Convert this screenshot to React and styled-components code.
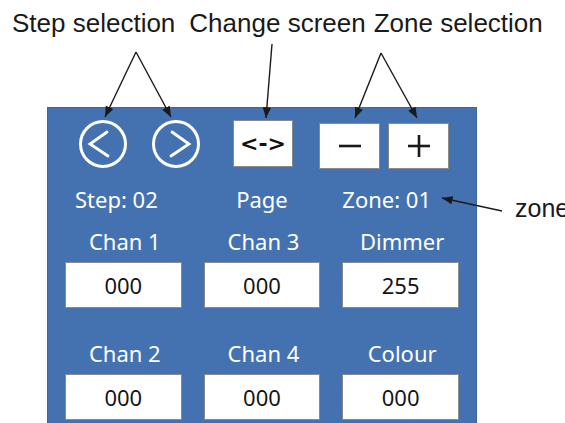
import React from "react";
import styled, { createGlobalStyle } from "styled-components";

const Global = createGlobalStyle`
  html, body { margin: 0; padding: 0; background: #ffffff; }
  body { font-family: "Noto Sans", "DejaVu Sans", sans-serif; }
`;

const Page = styled.div`
  position: relative;
  width: 565px;
  height: 423px;
  overflow: hidden;
  background: #ffffff;
`;

const Header = styled.div`
  display: flex;
  padding: 8px 0 0 12px;
  height: 30px;
  font-family: "Liberation Sans", Arial, sans-serif;
  font-size: 26px;
  line-height: 30px;
  color: #1a1a1a;
  white-space: nowrap;
`;

const HeaderLabel = styled.span`
  margin-left: ${(p) => p.$offset || 0}px;
`;

const Body = styled.div`
  display: flex;
  align-items: flex-start;
  margin-top: 69px;
  padding-left: 47px;
`;

const Panel = styled.div`
  box-sizing: border-box;
  width: 430px;
  height: 330px;
  flex-shrink: 0;
  background: #4472b0;
  border: 1px solid #3e669f;
  padding: 12px 17px 0;
  color: #ffffff;
`;

const TopRow = styled.div`
  display: flex;
  align-items: flex-start;
  height: 48px;
`;

const NavGroup = styled.div`
  display: flex;
  gap: 25px;
  margin-left: 14px;
`;

const CircleButton = styled.div`
  width: 48px;
  height: 48px;
  display: flex;
  align-items: center;
  justify-content: center;
`;

const ChangeButton = styled.div`
  box-sizing: border-box;
  width: 60px;
  height: 47px;
  margin-left: 33px;
  background: #ffffff;
  border: 1px solid #8a8a8a;
  display: flex;
  align-items: center;
  justify-content: center;
  font-family: "DejaVu Sans", sans-serif;
  font-weight: bold;
  font-size: 22px;
  color: #111111;
`;

const ZoneGroup = styled.div`
  display: flex;
  gap: 8px;
  margin-left: 26px;
  margin-top: 3px;
`;

const ZoneButton = styled.div`
  box-sizing: border-box;
  width: 61px;
  height: 46px;
  background: #ffffff;
  border: 1px solid #8a8a8a;
  display: flex;
  align-items: center;
  justify-content: center;
`;

const InfoRow = styled.div`
  display: grid;
  grid-template-columns: repeat(3, 1fr);
  column-gap: 22px;
  margin-top: 16px;
  font-size: 22px;
  line-height: 30px;
`;

const InfoText = styled.div`
  text-align: ${(p) => p.$align || "left"};
  padding-left: ${(p) => p.$pad || 0}px;
  white-space: nowrap;
`;

const ChannelGrid = styled.div`
  display: grid;
  grid-template-columns: repeat(3, 1fr);
  column-gap: 22px;
  row-gap: 30px;
  margin-top: 12px;
`;

const Cell = styled.div`
  display: flex;
  flex-direction: column;
  align-items: stretch;
`;

const CellLabel = styled.div`
  font-size: 22px;
  line-height: 30px;
  text-align: center;
  padding-left: 3px;
  white-space: nowrap;
`;

const ValueBox = styled.div`
  box-sizing: border-box;
  margin-top: 6px;
  height: 46px;
  background: #ffffff;
  border: 1px solid #8a8a8a;
  display: flex;
  align-items: center;
  justify-content: center;
  font-size: 22px;
  color: #151515;
`;

const SideNote = styled.div`
  margin-left: 38px;
  margin-top: 86px;
  font-family: "Liberation Sans", Arial, sans-serif;
  font-size: 25px;
  line-height: 30px;
  color: #1a1a1a;
  white-space: nowrap;
`;

const Overlay = styled.svg`
  position: absolute;
  left: 0;
  top: 0;
  pointer-events: none;
`;

function Chevron({ dir }) {
  const d = dir === "left" ? "M28 12 L11 24 L29 36" : "M20 12 L37 24 L19 36";
  return (
    <svg width="48" height="48" viewBox="0 0 48 48">
      <circle cx="24" cy="24" r="22.5" fill="none" stroke="#fff" strokeWidth="3" />
      <path d={d} fill="none" stroke="#fff" strokeWidth="2.8" strokeLinecap="round" strokeLinejoin="miter" />
    </svg>
  );
}

function MinusIcon() {
  return (
    <svg width="24" height="24" viewBox="0 0 24 24">
      <line x1="1" y1="12" x2="23" y2="12" stroke="#1a1a1a" strokeWidth="2.6" />
    </svg>
  );
}

function PlusIcon() {
  return (
    <svg width="24" height="24" viewBox="0 0 24 24">
      <line x1="1" y1="12" x2="23" y2="12" stroke="#1a1a1a" strokeWidth="2.6" />
      <line x1="12" y1="1" x2="12" y2="23" stroke="#1a1a1a" strokeWidth="2.6" />
    </svg>
  );
}

const channels = [
  { label: "Chan 1", value: "000" },
  { label: "Chan 3", value: "000" },
  { label: "Dimmer", value: "255" },
  { label: "Chan 2", value: "000" },
  { label: "Chan 4", value: "000" },
  { label: "Colour", value: "000" },
];

const arrows = [
  [136, 52, 105, 117],
  [136, 52, 171, 117],
  [272, 44, 266, 118],
  [381, 53, 355, 118],
  [381, 53, 417, 118],
  [502, 211, 442, 198],
];

export default function App() {
  return (
    <>
      <Global />
      <Page>
        <Header>
          <HeaderLabel>Step selection</HeaderLabel>
          <HeaderLabel $offset={14}>Change screen</HeaderLabel>
          <HeaderLabel $offset={8}>Zone selection</HeaderLabel>
        </Header>
        <Body>
          <Panel>
            <TopRow>
              <NavGroup>
                <CircleButton><Chevron dir="left" /></CircleButton>
                <CircleButton><Chevron dir="right" /></CircleButton>
              </NavGroup>
              <ChangeButton>&lt;-&gt;</ChangeButton>
              <ZoneGroup>
                <ZoneButton><MinusIcon /></ZoneButton>
                <ZoneButton><PlusIcon /></ZoneButton>
              </ZoneGroup>
            </TopRow>
            <InfoRow>
              <InfoText $pad={10}>Step: 02</InfoText>
              <InfoText $align="center">Page</InfoText>
              <InfoText>Zone: 01</InfoText>
            </InfoRow>
            <ChannelGrid>
              {channels.map((c) => (
                <Cell key={c.label}>
                  <CellLabel>{c.label}</CellLabel>
                  <ValueBox>{c.value}</ValueBox>
                </Cell>
              ))}
            </ChannelGrid>
          </Panel>
          <SideNote>zone</SideNote>
        </Body>
        <Overlay width="565" height="423" viewBox="0 0 565 423">
          <defs>
            <marker id="head" viewBox="0 0 10 8" refX="10" refY="4" markerWidth="11" markerHeight="8.5" markerUnits="userSpaceOnUse" orient="auto">
              <path d="M0 0 L10 4 L0 8 Z" fill="#1a1a1a" />
            </marker>
          </defs>
          {arrows.map(([x1, y1, x2, y2], i) => (
            <line key={i} x1={x1} y1={y1} x2={x2} y2={y2} stroke="#1a1a1a" strokeWidth="1.4" markerEnd="url(#head)" />
          ))}
        </Overlay>
      </Page>
    </>
  );
}
